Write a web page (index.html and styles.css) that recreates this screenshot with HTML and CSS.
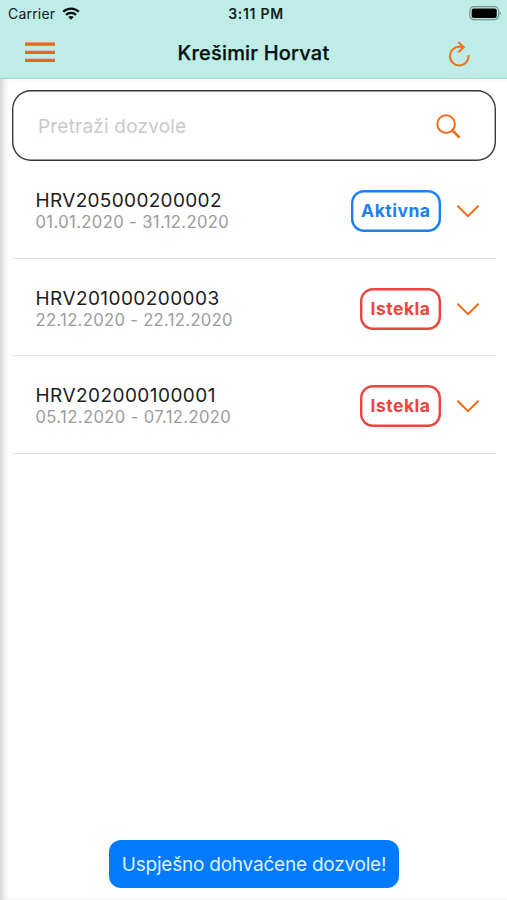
FILE: index.html
```html
<!DOCTYPE html>
<html lang="hr">
<head>
<meta charset="utf-8">
<meta name="viewport" content="width=device-width, initial-scale=1">
<title>Dozvole</title>
<link rel="stylesheet" href="styles.css">
</head>
<body>
<div class="app">
  <header class="header">
    <div class="status">
      <div class="carrier"><span>Carrier</span>
        <svg class="wifi" width="18" height="13" viewBox="0 0 18 13" fill="none" stroke="#06100f" stroke-width="2.3"><path d="M1.2 4.8C5.5.5 12.5.5 16.8 4.8M4 7.9C6.8 5.2 11.2 5.2 14 7.9"/><path d="M9 12.8 6.2 10C7.8 8.6 10.2 8.6 11.8 10Z" fill="#06100f" stroke="none"/></svg>
      </div>
      <div class="time">3:11 PM</div>
      <svg class="battery" width="33" height="15" viewBox="0 0 33 15"><rect x=".9" y=".7" width="28.6" height="13" rx="4" fill="none" stroke="#73958f" stroke-width="1.2"/><rect x="2.7" y="2.5" width="25" height="9.4" rx="2"/><path d="M30.7 5v4.5c1.6-.7 1.6-3.8 0-4.5Z" fill="#73958f"/></svg>
    </div>
    <div class="nav">
      <svg class="menu" width="30" height="21" viewBox="0 0 30 21" stroke="#ee6813" stroke-width="3.2"><path d="M0 2.2h30M0 10.3h30M0 18.4h30"/></svg>
      <h1 class="title">Krešimir Horvat</h1>
      <svg class="refresh" width="23" height="26" viewBox="0 0 23 26" fill="none" stroke="#f0701b" stroke-width="2"><path d="M20.5 14.2A9.3 9.3 0 1 1 11.3 5.8H15.5M10.2 1.1l5.5 5.1-5.3 5"/></svg>
    </div>
  </header>
  <main class="content">
    <div class="search">
      <span class="placeholder">Pretraži dozvole</span>
      <svg width="25" height="25" viewBox="0 0 25 25" fill="none" stroke="#f36c14"><circle cx="10.1" cy="10.1" r="8.8" stroke-width="2"/><path d="m16.5 16.5 6.4 6.4" stroke-width="2.7" stroke-linecap="round"/></svg>
    </div>
    <ul class="list">
      <li class="row">
        <div class="info"><div class="code c1">HRV205000200002</div><div class="dates d1">01.01.2020 - 31.12.2020</div></div>
        <span class="badge active">Aktivna</span>
        <svg class="chevron" width="22" height="13" viewBox="0 0 22 13"><path d="m1 1.2 10 10 10-10"/></svg>
      </li>
      <li class="row">
        <div class="info"><div class="code c2">HRV201000200003</div><div class="dates d2">22.12.2020 - 22.12.2020</div></div>
        <span class="badge expired">Istekla</span>
        <svg class="chevron" width="22" height="13" viewBox="0 0 22 13"><path d="m1 1.2 10 10 10-10"/></svg>
      </li>
      <li class="row">
        <div class="info"><div class="code c3">HRV202000100001</div><div class="dates d3">05.12.2020 - 07.12.2020</div></div>
        <span class="badge expired">Istekla</span>
        <svg class="chevron" width="22" height="13" viewBox="0 0 22 13"><path d="m1 1.2 10 10 10-10"/></svg>
      </li>
    </ul>
  </main>
  <div class="toast">Uspješno dohvaćene dozvole!</div>
</div>
</body>
</html>
```
FILE: styles.css
```css
* { box-sizing: border-box; }
body { margin: 0; background: #fff; font-family: Inter, "Liberation Sans", sans-serif; }
.app { position: relative; height: 900px; display: flex; flex-direction: column; overflow: hidden; }
svg { display: block; flex: none; }
.header { height: 79px; flex: none; background: #beece6; border-bottom: 1px solid #a9cfca; }
.status { height: 27px; display: grid; grid-template-columns: 1fr auto 1fr; align-items: center; padding: 0 5px 0 8px; font-size: 14px; line-height: 27px; color: #10201e; }
.carrier { display: flex; align-items: center; gap: 7px; letter-spacing: .2px; }
.time { font-weight: 600; font-size: 14px; letter-spacing: .7px; padding-left: 2px; }
.battery { justify-self: end; }
.nav { height: 51px; display: grid; grid-template-columns: 1fr auto 1fr; align-items: center; padding: 0 36px 0 36px; }
.menu { margin-left: -11px; }
.title { margin: 0; font-size: 20px; font-weight: 500; line-height: 50px; color: #07100f; -webkit-text-stroke: .25px #07100f; letter-spacing: .18px; }
.refresh { justify-self: end; position: relative; top: 1px; }
.content { flex: 1; padding: 11px 11px 0 12px; box-shadow: inset 6px 0 6px -3px #cfcfcf; }
.search { height: 70.5px; margin-bottom: .5px; box-shadow: inset 0 0 0 1.4px #373737; border-radius: 19px; display: flex; align-items: center; justify-content: space-between; padding: 2px 35px 0 26px; }
.placeholder { font-size: 19px; color: #c9c9cb; letter-spacing: .2px; }
.list { list-style: none; margin: 0; padding: 0; }
.row { height: 97.7px; display: flex; align-items: center; border-bottom: 1px solid #e3e3e3; padding: 4px 17.5px 0 23.5px; }
.info { flex: 1; }
.code { font-size: 19px; line-height: 22px; color: #1c1c1c; }
.dates { font-size: 16.6px; line-height: 21px; color: #9b9b9b; }
.c1 { letter-spacing: .33px; }
.c2 { letter-spacing: .43px; }
.c3 { letter-spacing: .45px; }
.d1 { letter-spacing: .38px; }
.d2 { letter-spacing: .33px; }
.d3 { letter-spacing: .38px; }
.badge { height: 42px; margin-top: -1px; border-radius: 13px; padding: 0 10.5px; font-size: 17.5px; font-weight: 700; line-height: 42px; letter-spacing: .5px; margin-right: 15.5px; box-shadow: inset 0 0 0 2.4px currentColor; }
.active { color: #1c80ee; }
.expired { color: #eb453e; }
.chevron { fill: none; stroke: #f36c14; stroke-width: 2; stroke-linecap: round; }
.toast { position: absolute; left: 109px; top: 840px; width: 290px; height: 48px; border-radius: 12px; background: #007aff; color: #dff2ff; font-size: 19px; letter-spacing: -.22px; line-height: 49px; text-align: center; white-space: nowrap; }
```
